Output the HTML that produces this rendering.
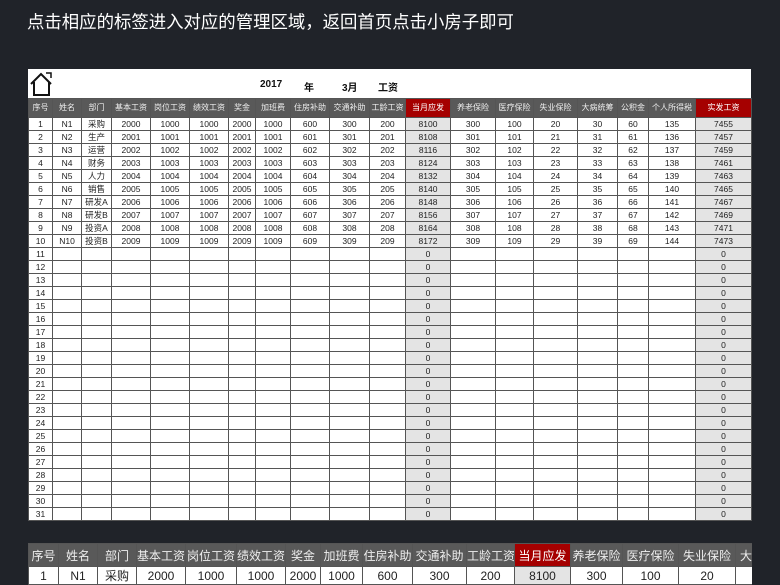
<!DOCTYPE html>
<html><head><meta charset="utf-8"><style>
body{margin:0;width:780px;height:585px;overflow:hidden;background:#202329;font-family:"Liberation Sans","Noto Sans CJK SC",sans-serif;position:relative}
.t{position:absolute;left:27px;top:9px;color:#fff;font-size:17.4px;letter-spacing:0;font-family:"Noto Sans CJK SC",sans-serif}
.box{position:absolute;left:28px;top:69px;width:723px;height:29px;background:#fff}
.ttl{position:absolute;top:79px;font-size:10px;font-weight:bold;color:#111}
table{border-collapse:collapse;table-layout:fixed;background:#fff}
td{border:1px solid #555;padding:0;text-align:center;color:#222;overflow:hidden;white-space:nowrap}
#m{position:absolute;left:28px;top:98px;width:723px;font-size:8.5px}
#m td{height:12px;line-height:12px}
#m tr.h td{height:18px;background:#595959;color:#eee;font-size:8px}
#m td.g{background:#e4e4e4}
td.r{background:#a50000!important;color:#fff!important}
.bw{position:absolute;left:28px;top:543px;width:724px;height:42px;overflow:hidden}
#b{width:760px;font-size:12px}
#b tr.h td{height:22px;background:#595959;color:#eee}
#b td{height:17px}
#b td.g{background:#e4e4e4}
</style></head><body>
<div class="t">点击相应的标签进入对应的管理区域，返回首页点击小房子即可</div>
<div class="box"><svg width="26" height="26" style="position:absolute;left:1px;top:2px" viewBox="0 0 26 26" fill="none" stroke="#111" stroke-width="2"><path d="M2 13 L12 3 L22 13 M5 11 V24 H20 V11"/><path d="M17 2 H22 V7" stroke-width="1.5"/></svg></div>
<div class="ttl" style="left:260px">2017</div><div class="ttl" style="left:304px">年</div><div class="ttl" style="left:342px">3月</div><div class="ttl" style="left:378px">工资</div>
<table id="m"><colgroup><col style="width:24px"><col style="width:29px"><col style="width:30px"><col style="width:39px"><col style="width:39px"><col style="width:39px"><col style="width:27px"><col style="width:35px"><col style="width:39px"><col style="width:40px"><col style="width:36px"><col style="width:45px"><col style="width:45px"><col style="width:38px"><col style="width:44px"><col style="width:40px"><col style="width:31px"><col style="width:47px"><col style="width:56px"></colgroup>
<tr class="h"><td>序号</td><td>姓名</td><td>部门</td><td>基本工资</td><td>岗位工资</td><td>绩效工资</td><td>奖金</td><td>加班费</td><td>住房补助</td><td>交通补助</td><td>工龄工资</td><td class="r">当月应发</td><td>养老保险</td><td>医疗保险</td><td>失业保险</td><td>大病统筹</td><td>公积金</td><td>个人所得税</td><td class="r">实发工资</td></tr>
<tr><td>1</td><td>N1</td><td>采购</td><td>2000</td><td>1000</td><td>1000</td><td>2000</td><td>1000</td><td>600</td><td>300</td><td>200</td><td class="g">8100</td><td>300</td><td>100</td><td>20</td><td>30</td><td>60</td><td>135</td><td class="g">7455</td></tr>
<tr><td>2</td><td>N2</td><td>生产</td><td>2001</td><td>1001</td><td>1001</td><td>2001</td><td>1001</td><td>601</td><td>301</td><td>201</td><td class="g">8108</td><td>301</td><td>101</td><td>21</td><td>31</td><td>61</td><td>136</td><td class="g">7457</td></tr>
<tr><td>3</td><td>N3</td><td>运营</td><td>2002</td><td>1002</td><td>1002</td><td>2002</td><td>1002</td><td>602</td><td>302</td><td>202</td><td class="g">8116</td><td>302</td><td>102</td><td>22</td><td>32</td><td>62</td><td>137</td><td class="g">7459</td></tr>
<tr><td>4</td><td>N4</td><td>财务</td><td>2003</td><td>1003</td><td>1003</td><td>2003</td><td>1003</td><td>603</td><td>303</td><td>203</td><td class="g">8124</td><td>303</td><td>103</td><td>23</td><td>33</td><td>63</td><td>138</td><td class="g">7461</td></tr>
<tr><td>5</td><td>N5</td><td>人力</td><td>2004</td><td>1004</td><td>1004</td><td>2004</td><td>1004</td><td>604</td><td>304</td><td>204</td><td class="g">8132</td><td>304</td><td>104</td><td>24</td><td>34</td><td>64</td><td>139</td><td class="g">7463</td></tr>
<tr><td>6</td><td>N6</td><td>销售</td><td>2005</td><td>1005</td><td>1005</td><td>2005</td><td>1005</td><td>605</td><td>305</td><td>205</td><td class="g">8140</td><td>305</td><td>105</td><td>25</td><td>35</td><td>65</td><td>140</td><td class="g">7465</td></tr>
<tr><td>7</td><td>N7</td><td>研发A</td><td>2006</td><td>1006</td><td>1006</td><td>2006</td><td>1006</td><td>606</td><td>306</td><td>206</td><td class="g">8148</td><td>306</td><td>106</td><td>26</td><td>36</td><td>66</td><td>141</td><td class="g">7467</td></tr>
<tr><td>8</td><td>N8</td><td>研发B</td><td>2007</td><td>1007</td><td>1007</td><td>2007</td><td>1007</td><td>607</td><td>307</td><td>207</td><td class="g">8156</td><td>307</td><td>107</td><td>27</td><td>37</td><td>67</td><td>142</td><td class="g">7469</td></tr>
<tr><td>9</td><td>N9</td><td>投资A</td><td>2008</td><td>1008</td><td>1008</td><td>2008</td><td>1008</td><td>608</td><td>308</td><td>208</td><td class="g">8164</td><td>308</td><td>108</td><td>28</td><td>38</td><td>68</td><td>143</td><td class="g">7471</td></tr>
<tr><td>10</td><td>N10</td><td>投资B</td><td>2009</td><td>1009</td><td>1009</td><td>2009</td><td>1009</td><td>609</td><td>309</td><td>209</td><td class="g">8172</td><td>309</td><td>109</td><td>29</td><td>39</td><td>69</td><td>144</td><td class="g">7473</td></tr>
<tr><td>11</td><td></td><td></td><td></td><td></td><td></td><td></td><td></td><td></td><td></td><td></td><td class="g">0</td><td></td><td></td><td></td><td></td><td></td><td></td><td class="g">0</td></tr>
<tr><td>12</td><td></td><td></td><td></td><td></td><td></td><td></td><td></td><td></td><td></td><td></td><td class="g">0</td><td></td><td></td><td></td><td></td><td></td><td></td><td class="g">0</td></tr>
<tr><td>13</td><td></td><td></td><td></td><td></td><td></td><td></td><td></td><td></td><td></td><td></td><td class="g">0</td><td></td><td></td><td></td><td></td><td></td><td></td><td class="g">0</td></tr>
<tr><td>14</td><td></td><td></td><td></td><td></td><td></td><td></td><td></td><td></td><td></td><td></td><td class="g">0</td><td></td><td></td><td></td><td></td><td></td><td></td><td class="g">0</td></tr>
<tr><td>15</td><td></td><td></td><td></td><td></td><td></td><td></td><td></td><td></td><td></td><td></td><td class="g">0</td><td></td><td></td><td></td><td></td><td></td><td></td><td class="g">0</td></tr>
<tr><td>16</td><td></td><td></td><td></td><td></td><td></td><td></td><td></td><td></td><td></td><td></td><td class="g">0</td><td></td><td></td><td></td><td></td><td></td><td></td><td class="g">0</td></tr>
<tr><td>17</td><td></td><td></td><td></td><td></td><td></td><td></td><td></td><td></td><td></td><td></td><td class="g">0</td><td></td><td></td><td></td><td></td><td></td><td></td><td class="g">0</td></tr>
<tr><td>18</td><td></td><td></td><td></td><td></td><td></td><td></td><td></td><td></td><td></td><td></td><td class="g">0</td><td></td><td></td><td></td><td></td><td></td><td></td><td class="g">0</td></tr>
<tr><td>19</td><td></td><td></td><td></td><td></td><td></td><td></td><td></td><td></td><td></td><td></td><td class="g">0</td><td></td><td></td><td></td><td></td><td></td><td></td><td class="g">0</td></tr>
<tr><td>20</td><td></td><td></td><td></td><td></td><td></td><td></td><td></td><td></td><td></td><td></td><td class="g">0</td><td></td><td></td><td></td><td></td><td></td><td></td><td class="g">0</td></tr>
<tr><td>21</td><td></td><td></td><td></td><td></td><td></td><td></td><td></td><td></td><td></td><td></td><td class="g">0</td><td></td><td></td><td></td><td></td><td></td><td></td><td class="g">0</td></tr>
<tr><td>22</td><td></td><td></td><td></td><td></td><td></td><td></td><td></td><td></td><td></td><td></td><td class="g">0</td><td></td><td></td><td></td><td></td><td></td><td></td><td class="g">0</td></tr>
<tr><td>23</td><td></td><td></td><td></td><td></td><td></td><td></td><td></td><td></td><td></td><td></td><td class="g">0</td><td></td><td></td><td></td><td></td><td></td><td></td><td class="g">0</td></tr>
<tr><td>24</td><td></td><td></td><td></td><td></td><td></td><td></td><td></td><td></td><td></td><td></td><td class="g">0</td><td></td><td></td><td></td><td></td><td></td><td></td><td class="g">0</td></tr>
<tr><td>25</td><td></td><td></td><td></td><td></td><td></td><td></td><td></td><td></td><td></td><td></td><td class="g">0</td><td></td><td></td><td></td><td></td><td></td><td></td><td class="g">0</td></tr>
<tr><td>26</td><td></td><td></td><td></td><td></td><td></td><td></td><td></td><td></td><td></td><td></td><td class="g">0</td><td></td><td></td><td></td><td></td><td></td><td></td><td class="g">0</td></tr>
<tr><td>27</td><td></td><td></td><td></td><td></td><td></td><td></td><td></td><td></td><td></td><td></td><td class="g">0</td><td></td><td></td><td></td><td></td><td></td><td></td><td class="g">0</td></tr>
<tr><td>28</td><td></td><td></td><td></td><td></td><td></td><td></td><td></td><td></td><td></td><td></td><td class="g">0</td><td></td><td></td><td></td><td></td><td></td><td></td><td class="g">0</td></tr>
<tr><td>29</td><td></td><td></td><td></td><td></td><td></td><td></td><td></td><td></td><td></td><td></td><td class="g">0</td><td></td><td></td><td></td><td></td><td></td><td></td><td class="g">0</td></tr>
<tr><td>30</td><td></td><td></td><td></td><td></td><td></td><td></td><td></td><td></td><td></td><td></td><td class="g">0</td><td></td><td></td><td></td><td></td><td></td><td></td><td class="g">0</td></tr>
<tr><td>31</td><td></td><td></td><td></td><td></td><td></td><td></td><td></td><td></td><td></td><td></td><td class="g">0</td><td></td><td></td><td></td><td></td><td></td><td></td><td class="g">0</td></tr>
</table>
<div class="bw"><table id="b"><colgroup><col style="width:30px"><col style="width:39px"><col style="width:39px"><col style="width:49px"><col style="width:51px"><col style="width:49px"><col style="width:35px"><col style="width:42px"><col style="width:50px"><col style="width:54px"><col style="width:48px"><col style="width:56px"><col style="width:52px"><col style="width:56px"><col style="width:57px"><col style="width:53px"></colgroup>
<tr class="h"><td>序号</td><td>姓名</td><td>部门</td><td>基本工资</td><td>岗位工资</td><td>绩效工资</td><td>奖金</td><td>加班费</td><td>住房补助</td><td>交通补助</td><td>工龄工资</td><td class="r">当月应发</td><td>养老保险</td><td>医疗保险</td><td>失业保险</td><td style="text-align:left;padding-left:4px">大病统筹</td></tr>
<tr><td>1</td><td>N1</td><td>采购</td><td>2000</td><td>1000</td><td>1000</td><td>2000</td><td>1000</td><td>600</td><td>300</td><td>200</td><td class="g">8100</td><td>300</td><td>100</td><td>20</td><td></td></tr>
</table></div>
</body></html>
